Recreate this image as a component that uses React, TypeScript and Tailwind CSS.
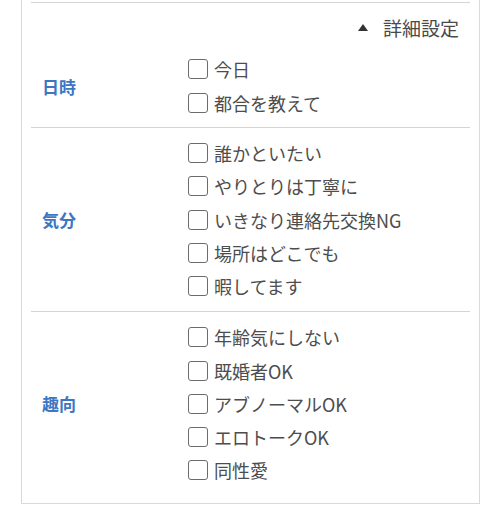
import React from "react";

const font = { fontFamily: '"Noto Sans CJK JP", "Noto Sans", sans-serif' };

function Item({ text, tall }: { text: string; tall?: boolean }) {
  return (
    <div className={"flex items-center " + (tall ? "h-[34px]" : "h-[33.25px]")}>
      <span className="box-border h-[20px] w-[20px] shrink-0 rounded-[3px] border-[1.5px] border-[#6b6b6b] bg-white" />
      <span className="ml-[6px] text-[18px] leading-none text-[#4d4d4d]">{text}</span>
    </div>
  );
}

function Section({
  label,
  items,
  className,
  tall,
}: {
  label: string;
  items: string[];
  className?: string;
  tall?: boolean;
}) {
  return (
    <div className={"flex items-center " + (className ?? "")}>
      <div className="w-[157px] shrink-0 pl-[11px] text-[17px] font-bold leading-none text-[#3b77c2]">
        {label}
      </div>
      <div className="flex flex-col">
        {items.map((t) => (
          <Item key={t} text={t} tall={tall} />
        ))}
      </div>
    </div>
  );
}

export default function App() {
  return (
    <div className="h-[523px] w-[500px] overflow-hidden bg-white" style={font}>
      <div className="ml-[21px] mt-[-20px] w-[459px] border border-[#d9d9d9] bg-white px-[9px]">
        <div className="h-[22px] border-b border-[#d4d4d4]" />
        <div className="border-b border-[#d4d4d4] pb-[7px]">
          <div className="flex h-[49px] items-center justify-end pr-[11px]">
            <span className="mr-[15px] h-0 w-0 border-b-[7px] border-l-[5px] border-r-[5px] border-b-[#333] border-l-transparent border-r-transparent" />
            <span className="text-[19px] leading-none text-[#4a4a4a]">詳細設定</span>
          </div>
          <Section label="日時" tall items={["今日", "都合を教えて"]} />
        </div>
        <Section
          label="気分"
          className="border-b border-[#d4d4d4] py-[8.5px]"
          items={[
            "誰かといたい",
            "やりとりは丁寧に",
            "いきなり連絡先交換NG",
            "場所はどこでも",
            "暇してます",
          ]}
        />
        <Section
          label="趣向"
          className="pb-[15.5px] pt-[8.5px]"
          items={["年齢気にしない", "既婚者OK", "アブノーマルOK", "エロトークOK", "同性愛"]}
        />
      </div>
    </div>
  );
}
